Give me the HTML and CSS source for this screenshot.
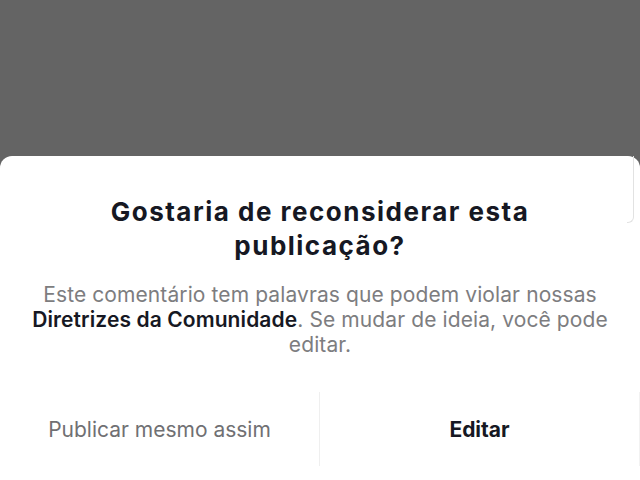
FILE: index.html
```html
<!DOCTYPE html>
<html lang="pt-BR">
<head>
<meta charset="utf-8">
<link rel="stylesheet" href="styles.css">
</head>
<body>
<div class="screen">
  <div class="backdrop"></div>
  <div class="sheet">
    <span class="edge-mark"></span>
    <h1 class="title">Gostaria de reconsiderar esta publicação?</h1>
    <p class="desc">Este comentário tem palavras que podem violar nossas <strong>Diretrizes da Comunidade</strong>. Se mudar de ideia, você pode editar.</p>
    <div class="actions">
      <button class="btn btn-secondary">Publicar mesmo assim</button>
      <button class="btn btn-primary">Editar</button>
    </div>
  </div>
</div>
</body>
</html>
```

FILE: styles.css
```css
html, body {
  margin: 0;
  padding: 0;
  height: 100%;
}
body {
  font-family: "Inter", "Open Sans", sans-serif;
  background: #646464;
  overflow: hidden;
}
.screen {
  display: flex;
  flex-direction: column;
  height: 480px;
}
.backdrop {
  height: 156px;
  flex: none;
}
.sheet {
  position: relative;
  flex: 1;
  background: #ffffff;
  border-radius: 12px 12px 0 0;
  display: flex;
  flex-direction: column;
  align-items: center;
}
.edge-mark {
  position: absolute;
  top: 0;
  right: 6px;
  width: 6px;
  height: 66px;
  border-right: 1px solid #e2e2e2;
  border-bottom: 1px solid #e2e2e2;
  border-bottom-right-radius: 6px;
}
.title {
  margin: 39px 0 0;
  width: 540px;
  text-align: center;
  font-size: 26px;
  line-height: 34px;
  font-weight: 700;
  letter-spacing: 1.5px;
  color: #161823;
}
.desc {
  margin: 19px 0 0;
  width: 610px;
  text-align: center;
  font-size: 21px;
  line-height: 25px;
  letter-spacing: 0.1px;
  color: #7d7d80;
}
.desc strong {
  font-weight: 600;
  color: #161823;
}
.actions {
  margin-top: 35px;
  width: 100%;
  display: grid;
  grid-template-columns: 1fr 1fr;
}
.btn {
  font-family: inherit;
  background: none;
  border: none;
  height: 74px;
  font-size: 21px;
  padding: 0;
  color: #161823;
}
.btn-secondary {
  color: #707073;
  border-right: 1px solid #efefef;
}
.btn-primary {
  font-weight: 700;
  border-right: 1px solid #f2f2f2;
}
```
